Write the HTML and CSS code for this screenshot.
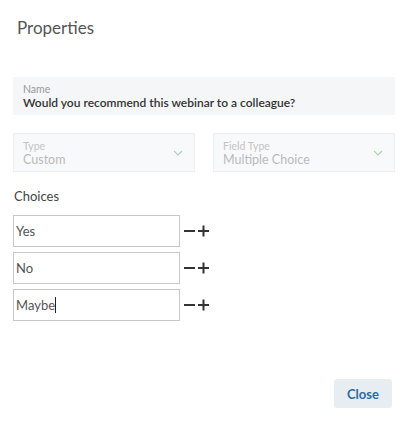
FILE: index.html
```html
<!DOCTYPE html>
<html>
<head>
<meta charset="utf-8">
<link rel="stylesheet" href="styles.css">
</head>
<body>
<div class="dialog">
  <h1 class="title">Properties</h1>
  <div class="field name-field">
    <div class="label">Name</div>
    <div class="value">Would you recommend this webinar to a colleague?</div>
  </div>
  <div class="row">
    <div class="field select disabled">
      <div class="sel-text">
        <div class="label">Type</div>
        <div class="value">Custom</div>
      </div>
      <svg class="chev" width="10" height="6" viewBox="0 0 10 6"><path d="M1 1 L5 5 L9 1" fill="none" stroke="#a9d3ad" stroke-width="1.1"/></svg>
    </div>
    <div class="field select disabled">
      <div class="sel-text">
        <div class="label">Field Type</div>
        <div class="value">Multiple Choice</div>
      </div>
      <svg class="chev" width="10" height="6" viewBox="0 0 10 6"><path d="M1 1 L5 5 L9 1" fill="none" stroke="#a9d3ad" stroke-width="1.1"/></svg>
    </div>
  </div>
  <div class="choices-label">Choices</div>
  <div class="choices">
    <div class="choice">
      <div class="input">Yes</div>
      <svg class="ctrl" width="27" height="12" viewBox="0 0 27 12"><path d="M1 6 H12 M15 6 H26 M20.5 0.5 V11.5" stroke="#333" stroke-width="2" fill="none"/></svg>
    </div>
    <div class="choice">
      <div class="input">No</div>
      <svg class="ctrl" width="27" height="12" viewBox="0 0 27 12"><path d="M1 6 H12 M15 6 H26 M20.5 0.5 V11.5" stroke="#333" stroke-width="2" fill="none"/></svg>
    </div>
    <div class="choice">
      <div class="input">Maybe<span class="caret"></span></div>
      <svg class="ctrl" width="27" height="12" viewBox="0 0 27 12"><path d="M1 6 H12 M15 6 H26 M20.5 0.5 V11.5" stroke="#333" stroke-width="2" fill="none"/></svg>
    </div>
  </div>
  <div class="footer">
    <button class="close">Close</button>
  </div>
</div>
</body>
</html>
```
FILE: styles.css
```css
html, body {
  margin: 0;
  padding: 0;
  background: #fff;
}
body {
  font-family: Lato, "Open Sans", sans-serif;
  width: 407px;
  height: 432px;
  overflow: hidden;
}
.dialog {
  padding: 0 12px 0 13px;
}
.title {
  margin: 0;
  padding: 17px 0 0 4px;
  height: 60px;
  box-sizing: border-box;
  font-size: 17px;
  font-weight: normal;
  color: #555;
  line-height: 22px;
}
.field {
  box-sizing: border-box;
}
.name-field {
  margin-top: 17px;
  height: 38px;
  background: #f5f6f8;
  padding: 7px 10px 0 10px;
}
.label {
  font-size: 10.5px;
  line-height: 11px;
  color: #999;
}
.name-field .value {
  font-size: 12px;
  line-height: 15px;
  color: #333;
  font-weight: 600;
}
.row {
  display: flex;
  gap: 18px;
  margin-top: 18px;
}
.select {
  flex: 1;
  height: 39px;
  border: 1px solid #eceef0;
  background: #f8f9fa;
  display: flex;
  align-items: center;
  padding: 0 11px 0 9px;
}
.sel-text {
  flex: 1;
  padding-top: 3px;
}
.disabled .label {
  color: #c4c4c4;
}
.disabled .value {
  font-size: 12.5px;
  line-height: 16px;
  color: #bababa;
}
.chev {
  display: block;
}
.choices-label {
  margin-top: 17px;
  padding-left: 1px;
  font-size: 13px;
  line-height: 15px;
  color: #444;
}
.choices {
  margin-top: 11px;
  display: flex;
  flex-direction: column;
  gap: 5px;
}
.choice {
  display: flex;
  align-items: center;
}
.input {
  box-sizing: border-box;
  width: 167px;
  height: 32px;
  border: 1px solid #c8c8c8;
  padding-left: 2px;
  font-size: 13px;
  line-height: 30px;
  color: #555;
  display: flex;
  align-items: center;
}
.caret {
  display: inline-block;
  width: 1px;
  height: 16px;
  background: #222;
  margin-left: 0;
}
.ctrl {
  display: block;
  margin-left: 3px;
}
.footer {
  display: flex;
  justify-content: flex-end;
  margin-top: 58px;
  padding-right: 3px;
}
.close {
  width: 58px;
  height: 29px;
  border: none;
  border-radius: 3px;
  background: #e8edf1;
  color: #2b6ca3;
  font-family: Lato, "Open Sans", sans-serif;
  font-weight: bold;
  font-size: 13px;
  padding: 0;
  cursor: pointer;
}
```
